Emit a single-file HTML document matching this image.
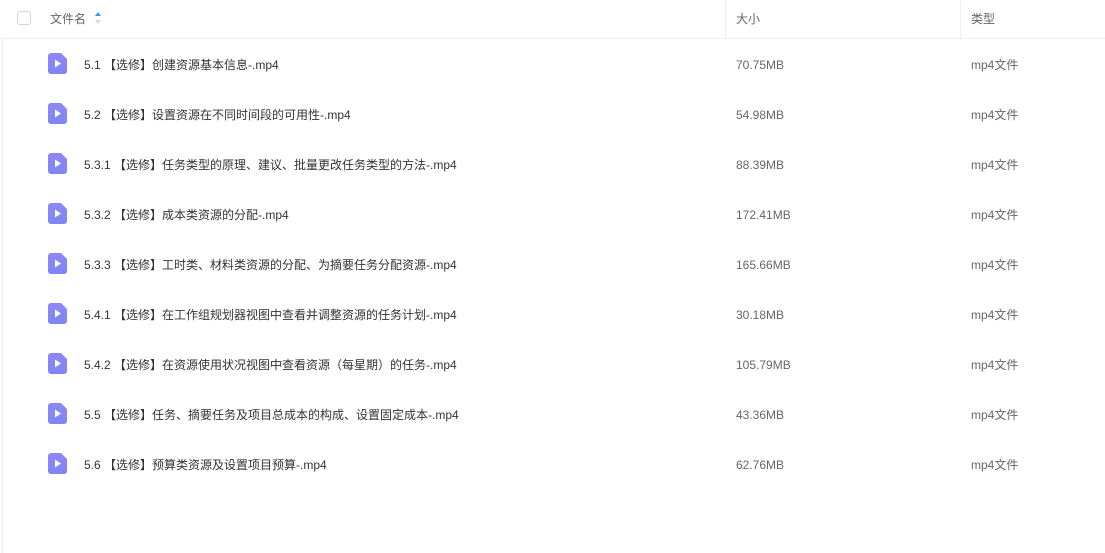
<!DOCTYPE html>
<html><head><meta charset="utf-8"><style>
*{margin:0;padding:0;box-sizing:border-box}
body{width:1105px;height:553px;background:#fff;font-family:"Liberation Sans","Noto Sans CJK SC",sans-serif;font-size:12px;overflow:hidden;position:relative}
.lb{position:absolute;left:2px;top:38px;width:1px;height:515px;background:#eee}
.hd{position:absolute;left:0;top:0;width:1105px;height:39px;border-bottom:1px solid #ededed}
.cb{position:absolute;left:17px;top:11px;width:14px;height:14px;border:1px solid #d6d6d6;border-radius:3px;background:#fff}
.ht{position:absolute;top:11px;color:#666;font-size:12px;line-height:16px}
.vd{position:absolute;top:0;width:1px;height:38px;background:#f0f0f0}
.row{position:absolute;left:0;width:1105px;height:50px}
.ic{position:absolute;left:48px;top:14px}
.nm{position:absolute;left:84px;top:18px;color:#333;line-height:16px}
.sz{position:absolute;left:736px;top:18px;color:#666;line-height:16px}
.tp{position:absolute;left:971px;top:18px;color:#666;line-height:16px}
</style></head><body>
<div class="lb"></div>
<div class="hd">
<div class="cb"></div>
<div class="ht" style="left:50px">文件名</div>
<svg style="position:absolute;left:95px;top:12px" width="6" height="12"><path d="M3 0L6 4H0Z" fill="#2f9df8"/><path d="M3 12L6 8H0Z" fill="#d5d9de"/></svg>
<div class="vd" style="left:725px"></div>
<div class="ht" style="left:736px">大小</div>
<div class="vd" style="left:960px"></div>
<div class="ht" style="left:971px">类型</div>
</div>
<div class="row" style="top:39px"><svg class="ic" width="19" height="21"><defs><linearGradient id="g" x1="0" y1="0" x2="0" y2="1"><stop offset="0" stop-color="#8f86f7"/><stop offset="1" stop-color="#7e86f4"/></linearGradient></defs><path d="M3 0H13L19 6V18A3 3 0 0 1 16 21H3A3 3 0 0 1 0 18V3A3 3 0 0 1 3 0Z" fill="url(#g)"/><path d="M7 6.5L13 10.5L7 14.5Z" fill="#fff"/></svg><div class="nm">5.1 【选修】创建资源基本信息-.mp4</div><div class="sz">70.75MB</div><div class="tp">mp4文件</div></div>
<div class="row" style="top:89px"><svg class="ic" width="19" height="21"><path d="M3 0H13L19 6V18A3 3 0 0 1 16 21H3A3 3 0 0 1 0 18V3A3 3 0 0 1 3 0Z" fill="url(#g)"/><path d="M7 6.5L13 10.5L7 14.5Z" fill="#fff"/></svg><div class="nm">5.2 【选修】设置资源在不同时间段的可用性-.mp4</div><div class="sz">54.98MB</div><div class="tp">mp4文件</div></div>
<div class="row" style="top:139px"><svg class="ic" width="19" height="21"><path d="M3 0H13L19 6V18A3 3 0 0 1 16 21H3A3 3 0 0 1 0 18V3A3 3 0 0 1 3 0Z" fill="url(#g)"/><path d="M7 6.5L13 10.5L7 14.5Z" fill="#fff"/></svg><div class="nm">5.3.1 【选修】任务类型的原理、建议、批量更改任务类型的方法-.mp4</div><div class="sz">88.39MB</div><div class="tp">mp4文件</div></div>
<div class="row" style="top:189px"><svg class="ic" width="19" height="21"><path d="M3 0H13L19 6V18A3 3 0 0 1 16 21H3A3 3 0 0 1 0 18V3A3 3 0 0 1 3 0Z" fill="url(#g)"/><path d="M7 6.5L13 10.5L7 14.5Z" fill="#fff"/></svg><div class="nm">5.3.2 【选修】成本类资源的分配-.mp4</div><div class="sz">172.41MB</div><div class="tp">mp4文件</div></div>
<div class="row" style="top:239px"><svg class="ic" width="19" height="21"><path d="M3 0H13L19 6V18A3 3 0 0 1 16 21H3A3 3 0 0 1 0 18V3A3 3 0 0 1 3 0Z" fill="url(#g)"/><path d="M7 6.5L13 10.5L7 14.5Z" fill="#fff"/></svg><div class="nm">5.3.3 【选修】工时类、材料类资源的分配、为摘要任务分配资源-.mp4</div><div class="sz">165.66MB</div><div class="tp">mp4文件</div></div>
<div class="row" style="top:289px"><svg class="ic" width="19" height="21"><path d="M3 0H13L19 6V18A3 3 0 0 1 16 21H3A3 3 0 0 1 0 18V3A3 3 0 0 1 3 0Z" fill="url(#g)"/><path d="M7 6.5L13 10.5L7 14.5Z" fill="#fff"/></svg><div class="nm">5.4.1 【选修】在工作组规划器视图中查看并调整资源的任务计划-.mp4</div><div class="sz">30.18MB</div><div class="tp">mp4文件</div></div>
<div class="row" style="top:339px"><svg class="ic" width="19" height="21"><path d="M3 0H13L19 6V18A3 3 0 0 1 16 21H3A3 3 0 0 1 0 18V3A3 3 0 0 1 3 0Z" fill="url(#g)"/><path d="M7 6.5L13 10.5L7 14.5Z" fill="#fff"/></svg><div class="nm">5.4.2 【选修】在资源使用状况视图中查看资源（每星期）的任务-.mp4</div><div class="sz">105.79MB</div><div class="tp">mp4文件</div></div>
<div class="row" style="top:389px"><svg class="ic" width="19" height="21"><path d="M3 0H13L19 6V18A3 3 0 0 1 16 21H3A3 3 0 0 1 0 18V3A3 3 0 0 1 3 0Z" fill="url(#g)"/><path d="M7 6.5L13 10.5L7 14.5Z" fill="#fff"/></svg><div class="nm">5.5 【选修】任务、摘要任务及项目总成本的构成、设置固定成本-.mp4</div><div class="sz">43.36MB</div><div class="tp">mp4文件</div></div>
<div class="row" style="top:439px"><svg class="ic" width="19" height="21"><path d="M3 0H13L19 6V18A3 3 0 0 1 16 21H3A3 3 0 0 1 0 18V3A3 3 0 0 1 3 0Z" fill="url(#g)"/><path d="M7 6.5L13 10.5L7 14.5Z" fill="#fff"/></svg><div class="nm">5.6 【选修】预算类资源及设置项目预算-.mp4</div><div class="sz">62.76MB</div><div class="tp">mp4文件</div></div>
</body></html>
